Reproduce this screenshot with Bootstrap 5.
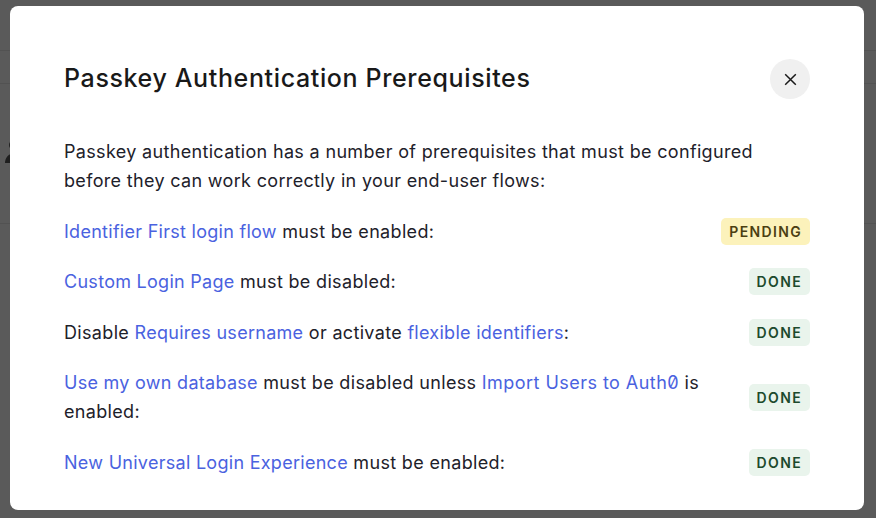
<!DOCTYPE html>
<html lang="en">
<head>
<meta charset="utf-8">
<title>Passkey Authentication Prerequisites</title>
<link href="https://cdn.jsdelivr.net/npm/bootstrap@5.3.0/dist/css/bootstrap.min.css" rel="stylesheet">
<style>
html, body { height: 100%; overflow: hidden; }
body { background: #5a5a5a; font-family: Inter, "Liberation Sans", sans-serif; color: #1e212a; font-feature-settings: "zero" 1; }
.pk-stage { height: 518px; padding: 6px 12px 8px 10px;
  background:
    linear-gradient(#525252, #525252) 0 50px / 100% 1px no-repeat,
    linear-gradient(#525252, #525252) 0 83px / 100% 1px no-repeat,
    linear-gradient(#525252, #525252) 0 223px / 100% 1px no-repeat; }
.pk-behind { position: absolute; left: 0; top: 138px; color: #1f1f1f; }
.pk-dialog { position: relative; width: 854px; height: 504px; border-radius: 8px; background: #fff; padding: 53px 54px 0; }
.pk-title { font-family: Inter, "Liberation Sans", sans-serif; font-size: 25px; font-weight: 500; line-height: 39px; letter-spacing: .63px; margin: 0 0 1px; color: #191919; }
.pk-close { width: 40px; height: 40px; border: 0; padding: 0; border-radius: 50%; background: #f0f0f0; color: #191919; }
.pk-body { font-size: 18px; line-height: 29px; color: #1e212a; letter-spacing: .33px; }
.pk-intro { margin: 38px 0 0; }
.pk-row { margin-top: 21.6px; }
.pk-row a { color: #4a62e0; text-decoration: none; letter-spacing: .28px; }
.pk-row a.pk-wide { letter-spacing: .46px; }
.pk-label { max-width: 650px; }
.pk-chip { font-size: 14px; font-weight: 600; line-height: 17px; letter-spacing: 1.35px; padding: 5px 8px 5px; border-radius: 5px; }
.pk-chip-wait { background: #fcf2bb; color: #4b3f12; }
.pk-chip-ok { background: #e9f4ec; color: #1c4a2c; }
</style>
</head>
<body>
<div class="pk-stage">
  <svg class="pk-behind" width="24" height="28" viewBox="0 0 24 28" fill="currentColor" aria-hidden="true"><circle cx="14" cy="7" r="5"/><path d="M5 25c0-5 3-9 9-10 6 1 9 5 9 10z"/></svg>
  <div class="pk-dialog" role="dialog">
    <div class="d-flex justify-content-between align-items-center">
      <h1 class="pk-title">Passkey Authentication Prerequisites</h1>
      <button class="pk-close d-flex align-items-center justify-content-center" aria-label="Close">
        <svg width="14" height="14" viewBox="0 0 14 14" fill="none" stroke="currentColor" stroke-width="1.5"><path d="M2.2 2.2l10.6 10.6M12.8 2.2L2.2 12.8"/></svg>
      </button>
    </div>
    <div class="pk-body">
      <p class="pk-intro">Passkey authentication has a number of prerequisites that must be configured before they can work correctly in your end-user flows:</p>
      <div class="pk-row d-flex justify-content-between align-items-center">
        <div class="pk-label"><a href="#">Identifier First login flow</a> must be enabled:</div>
        <span class="pk-chip pk-chip-wait">PENDING</span>
      </div>
      <div class="pk-row d-flex justify-content-between align-items-center">
        <div class="pk-label"><a href="#">Custom Login Page</a> must be disabled:</div>
        <span class="pk-chip pk-chip-ok">DONE</span>
      </div>
      <div class="pk-row d-flex justify-content-between align-items-center">
        <div class="pk-label">Disable <a href="#">Requires username</a> or activate <a href="#">flexible identifiers</a>:</div>
        <span class="pk-chip pk-chip-ok">DONE</span>
      </div>
      <div class="pk-row d-flex justify-content-between align-items-center">
        <div class="pk-label"><a href="#">Use my own database</a> must be disabled unless <a class="pk-wide" href="#">Import Users to Auth0</a> is enabled:</div>
        <span class="pk-chip pk-chip-ok">DONE</span>
      </div>
      <div class="pk-row d-flex justify-content-between align-items-center">
        <div class="pk-label"><a href="#">New Universal Login Experience</a> must be enabled:</div>
        <span class="pk-chip pk-chip-ok">DONE</span>
      </div>
    </div>
  </div>
</div>
<script src="https://cdn.jsdelivr.net/npm/bootstrap@5.3.0/dist/js/bootstrap.bundle.min.js"></script>
</body>
</html>
